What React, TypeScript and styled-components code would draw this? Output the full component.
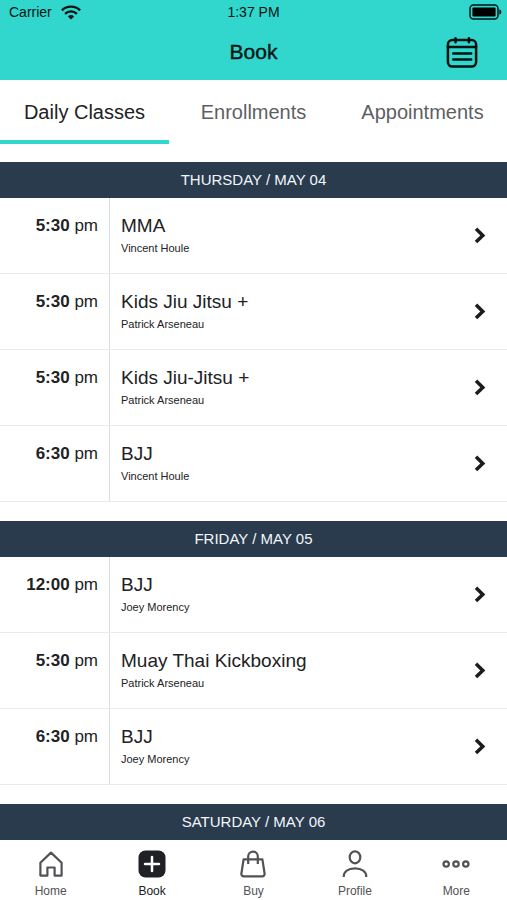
import React from "react";
import styled, { createGlobalStyle } from "styled-components";

const GlobalStyle = createGlobalStyle`
  *, *::before, *::after { box-sizing: border-box; }
  body {
    margin: 0;
    background: #fff;
    color: #212224;
    font-family: "Liberation Sans", Arial, sans-serif;
  }
  button { font: inherit; color: inherit; background: none; border: 0; padding: 0; cursor: pointer; }
  h1, h2, h3, p, ul { margin: 0; padding: 0; font-weight: normal; }
  ul { list-style: none; }
`;

const Screen = styled.div`
  display: flex;
  flex-direction: column;
  height: 100vh;
`;

const Header = styled.header`
  flex: none;
  background: #31d7cc;
  color: #061414;
`;

const StatusBar = styled.div`
  display: grid;
  grid-template-columns: 1fr auto 1fr;
  align-items: center;
  height: 24px;
  padding: 0 5px;
  font-size: 14px;
  line-height: 24px;
`;

const Carrier = styled.div`
  display: flex;
  align-items: center;
  gap: 9px;
  padding-left: 4px;
`;

const Battery = styled.svg`
  justify-self: end;
`;

const TitleBar = styled.div`
  display: grid;
  grid-template-columns: 1fr auto 1fr;
  align-items: center;
  height: 56px;
  padding: 0 28px;
`;

const Title = styled.h1`
  grid-column: 2;
  font-size: 21px;
  line-height: 24px;
  -webkit-text-stroke: 0.4px currentColor;
`;

const CalendarButton = styled.button`
  justify-self: end;
  display: flex;
`;

const Tabs = styled.div`
  flex: none;
  display: grid;
  grid-template-columns: repeat(3, 1fr);
  height: 64px;
`;

const Tab = styled.button<{ $active?: boolean }>`
  && {
    padding-top: 4px;
    border-bottom: 4px solid ${(p) => (p.$active ? "#31d7cc" : "transparent")};
    color: ${(p) => (p.$active ? "#212224" : "#5e5f63")};
    font-size: 20px;
    line-height: 24px;
    white-space: nowrap;
  }
`;

const Schedule = styled.main`
  flex: 1;
  min-height: 0;
  padding-top: 18px;
  overflow: hidden auto;
  scrollbar-width: none;
`;

const Day = styled.section`
  margin-bottom: 19px;
`;

const DayTitle = styled.h2`
  background: #2b3b4e;
  color: #f1f6fb;
  font-size: 15px;
  line-height: 36px;
  text-align: center;
`;

const ClassRow = styled.button`
  && {
    display: grid;
    grid-template-columns: 110px 1fr auto;
    width: 100%;
    height: 76px;
    padding-right: 20px;
    border-bottom: 1px solid #e9ebed;
    text-align: left;
  }
`;

const Time = styled.div`
  padding: 16px 11px 0 0;
  border-right: 1px solid #d9dee2;
  font-size: 17px;
  line-height: 24px;
  text-align: right;
`;

const Details = styled.div`
  padding: 16px 0 0 11px;
`;

const ClassName = styled.h3`
  font-size: 19px;
  line-height: 24px;
`;

const Teacher = styled.p`
  font-size: 11px;
  line-height: 20px;
`;

const Chevron = styled.svg`
  align-self: center;
`;

const NavBar = styled.nav`
  flex: none;
  display: grid;
  grid-template-columns: repeat(5, 1fr);
  height: 60px;
  background: #fff;
`;

const NavItem = styled.button<{ $active?: boolean }>`
  && {
    display: flex;
    flex-direction: column;
    align-items: center;
    gap: 4px;
    padding-top: 10px;
    color: ${(p) => (p.$active ? "#202124" : "#515255")};
    font-size: 12px;
    line-height: 18px;
  }
`;

type ClassItem = { time: string; name: string; teacher: string };

const days: { title: string; classes: ClassItem[] }[] = [
  {
    title: "THURSDAY / MAY 04",
    classes: [
      { time: "5:30", name: "MMA", teacher: "Vincent Houle" },
      { time: "5:30", name: "Kids Jiu Jitsu +", teacher: "Patrick Arseneau" },
      { time: "5:30", name: "Kids Jiu-Jitsu +", teacher: "Patrick Arseneau" },
      { time: "6:30", name: "BJJ", teacher: "Vincent Houle" },
    ],
  },
  {
    title: "FRIDAY / MAY 05",
    classes: [
      { time: "12:00", name: "BJJ", teacher: "Joey Morency" },
      { time: "5:30", name: "Muay Thai Kickboxing", teacher: "Patrick Arseneau" },
      { time: "6:30", name: "BJJ", teacher: "Joey Morency" },
    ],
  },
  { title: "SATURDAY / MAY 06", classes: [] },
];

const iconProps = {
  width: 28,
  height: 28,
  viewBox: "0 0 28 28",
  fill: "none",
  stroke: "currentColor",
  strokeWidth: 2.2,
  strokeLinejoin: "round" as const,
  "aria-hidden": true,
};

const navItems = [
  {
    label: "Home",
    icon: (
      <svg {...iconProps}>
        <path d="M3.4 12.7 14 2.6l10.6 10.1v12.9h-7v-8.1h-7.2v8.1h-7Z" />
      </svg>
    ),
  },
  {
    label: "Book",
    active: true,
    icon: (
      <svg {...iconProps}>
        <rect x="0.5" y="0.5" width="27" height="27" rx="7" fill="#202124" stroke="none" />
        <path d="M14 7v14M7 14h14" stroke="#fff" strokeWidth="2.5" strokeLinecap="round" />
      </svg>
    ),
  },
  {
    label: "Buy",
    icon: (
      <svg {...iconProps}>
        <path d="M4.6 9.3h18.8l2.2 14.2a2.5 2.5 0 0 1-2.4 2.9H4.8a2.5 2.5 0 0 1-2.4-2.9Z" />
        <path d="M9.2 14V6.4a4.8 4.8 0 0 1 9.6 0V14" />
      </svg>
    ),
  },
  {
    label: "Profile",
    icon: (
      <svg {...iconProps}>
        <ellipse cx="14" cy="7.3" rx="5.3" ry="6" />
        <path d="M2.7 27c0-5.3 4.4-8.6 11.3-8.6s11.3 3.3 11.3 8.6" />
      </svg>
    ),
  },
  {
    label: "More",
    icon: (
      <svg {...iconProps}>
        <circle cx="4.2" cy="14" r="2.7" />
        <circle cx="14" cy="14" r="2.7" />
        <circle cx="23.8" cy="14" r="2.7" />
      </svg>
    ),
  },
];

export default function App() {
  return (
    <>
      <GlobalStyle />
      <Screen>
        <Header>
          <StatusBar>
            <Carrier>
              Carrier
              <svg width="20" height="15" viewBox="0 0 20 15" fill="none" stroke="currentColor" strokeWidth="2.4" aria-hidden>
                <path d="M0.9 5.3a13.2 13.2 0 0 1 18.2 0M4.1 8.8a8.5 8.5 0 0 1 11.8 0" />
                <path d="M10 14.5 6.9 11.4a4.5 4.5 0 0 1 6.2 0Z" fill="currentColor" stroke="none" />
              </svg>
            </Carrier>
            <span>1:37 PM</span>
            <Battery width="33" height="16" viewBox="0 0 33 16" aria-hidden>
              <rect x="1" y="1" width="28" height="14" rx="3.5" fill="none" stroke="currentColor" strokeWidth="1.5" />
              <rect x="3.4" y="3.4" width="23.2" height="9.2" rx="1" fill="#000" />
              <path d="M30.4 5.2a3 3 0 0 1 0 5.6Z" fill="currentColor" />
            </Battery>
          </StatusBar>
          <TitleBar>
            <Title>Book</Title>
            <CalendarButton type="button" aria-label="Open calendar">
              <svg width="34" height="34" viewBox="0 0 34 34" fill="none" stroke="#02100f" strokeWidth="2.5" strokeLinecap="round" aria-hidden>
                <rect x="2.9" y="5" width="28.2" height="26.6" rx="4.5" />
                <path d="M2.9 12h28.2M23.9 3.2v4M10.5 3.2v4" />
                <path d="M8.2 18.4h18M8.2 24.6h18" />
              </svg>
            </CalendarButton>
          </TitleBar>
        </Header>

        <Tabs role="tablist">
          <Tab type="button" role="tab" aria-selected $active>Daily Classes</Tab>
          <Tab type="button" role="tab" aria-selected={false}>Enrollments</Tab>
          <Tab type="button" role="tab" aria-selected={false}>Appointments</Tab>
        </Tabs>

        <Schedule>
          {days.map((day) => (
            <Day key={day.title}>
              <DayTitle>{day.title}</DayTitle>
              <ul>
                {day.classes.map((item) => (
                  <li key={item.time + item.name}>
                    <ClassRow type="button">
                      <Time>
                        <b>{item.time}</b> pm
                      </Time>
                      <Details>
                        <ClassName>{item.name}</ClassName>
                        <Teacher>{item.teacher}</Teacher>
                      </Details>
                      <Chevron width="14" height="18" viewBox="0 0 14 18" fill="none" stroke="#1c1c1e" strokeWidth="3.5" aria-hidden>
                        <path d="M3 1.8 9.8 8.4 3 15" />
                      </Chevron>
                    </ClassRow>
                  </li>
                ))}
              </ul>
            </Day>
          ))}
        </Schedule>

        <NavBar aria-label="Main">
          {navItems.map((item) => (
            <NavItem key={item.label} type="button" $active={item.active} aria-current={item.active ? "page" : undefined}>
              {item.icon}
              {item.label}
            </NavItem>
          ))}
        </NavBar>
      </Screen>
    </>
  );
}
